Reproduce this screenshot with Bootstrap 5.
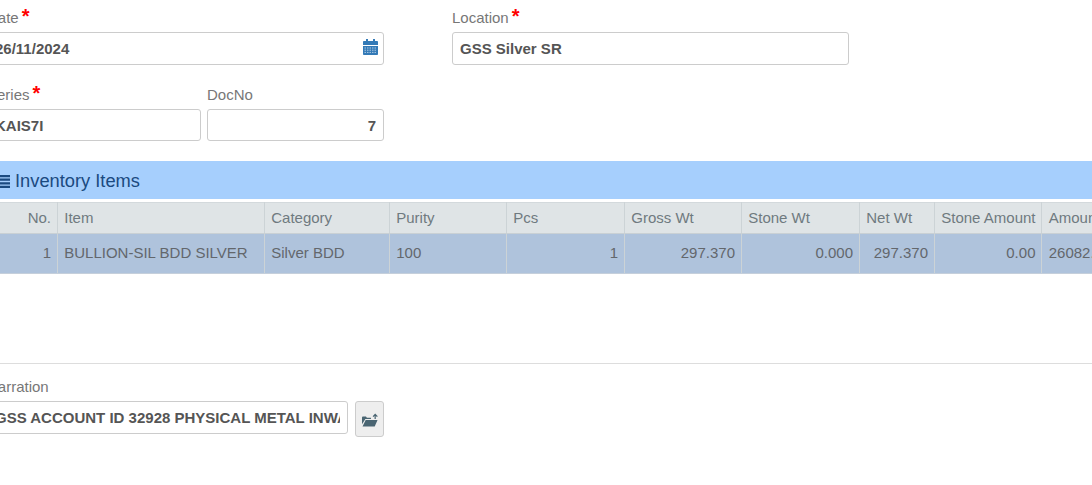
<!DOCTYPE html>
<html lang="en"><head><meta charset="utf-8"><title>Inventory</title>
<link href="https://cdn.jsdelivr.net/npm/bootstrap@5.3.0/dist/css/bootstrap.min.css" rel="stylesheet">
<style>
html,body{height:485px;overflow:hidden;background:#fff}
body{font-family:"Liberation Sans",Arial,sans-serif;font-size:15px;color:#555}
.sheet{margin-left:-13px;width:1240px;padding-top:8px}
.fld-label{display:block;color:#777;font-size:15px;line-height:20px;height:20px;margin:0 0 4px}
.req{color:#f00;font-size:20px;font-weight:700;line-height:14px;margin-left:3px;vertical-align:0}
.fld-input{display:block;height:33px;width:100%;border:1px solid #ccc;border-radius:3px;padding:0 7px;font-weight:700;font-size:15px;color:#555;background:#fff;font-family:inherit;outline:0}
.w-date{width:397px}.w-loc{width:397px;margin-left:68px}
.rowb{margin-top:20px}
.w-series{width:214px}.w-doc{width:177px;margin-left:6px}
.h32{height:32px}
.cal-wrap{position:relative}
.cal-ico{position:absolute;right:6px;top:7px;width:15px;height:16px}
.bar{margin-top:20px;height:38px;background:#a6cffd;color:#1b4a80;font-size:18.3px;line-height:40px;padding-left:13px;width:1105px}
.bar svg{width:10px;height:13px;margin-right:5px;vertical-align:-1px}
.inv{table-layout:fixed;border-collapse:collapse;margin-top:3px;width:auto}
.inv th,.inv td{padding:0 6px 0 6.25px;border:1px solid #ccd3d6;border-top:0;font-weight:400;font-size:15px;white-space:nowrap;overflow:hidden}
.inv th{height:31px;background:#dfe4e6;color:#6f7a80;border-top:1px solid #d3d9dc;border-bottom:1px solid #c9d0d4}
.inv td{height:40px;background:#afc3dc;color:#63676c;border-bottom:1px solid #c5cfdb}
.inv .num{text-align:right}
.rule{border:0;border-top:1px solid #ddd;opacity:1;margin:89px 0 0;width:1105px}
.nar{margin-top:13px}
.nar .fld-label{margin-bottom:4px}
.w-nar{width:361px}
.attach{width:29px;height:36px;margin-left:7px;padding:0;background:#eee;border:1px solid #ccc;border-radius:3px;display:flex;align-items:center;justify-content:center}
.attach svg{width:16px;height:14px;margin-top:2px}
</style></head>
<body>
<div class="sheet">
  <div class="d-flex">
    <div class="w-date"><label class="fld-label">Date<span class="req">*</span></label>
      <div class="cal-wrap"><input class="fld-input" value="26/11/2024">
        <svg class="cal-ico" viewBox="0 0 15 16"><path fill="#337ab7" d="M3 0h2v2h5V0h2v2h2.2c.4 0 .8.4.8.8V6H0V2.800C0 2.400.4 2 .8 2H3zM0 7h15v8.200c0 .4-.4.8-.8.8H.8c-.4 0-.8-.4-.8-.8z"/><path stroke="#cfe0f0" stroke-width=".8" stroke-dasharray="1.500 1" d="M1.500 9h12M1.500 11.200h12M1.500 13.400h12"/></svg>
      </div></div>
    <div class="w-loc"><label class="fld-label">Location<span class="req">*</span></label><input class="fld-input" value="GSS Silver SR"></div>
  </div>
  <div class="d-flex rowb">
    <div class="w-series"><label class="fld-label">Series<span class="req">*</span></label><input class="fld-input h32" value="KAIS7I"></div>
    <div class="w-doc"><label class="fld-label">DocNo</label><input class="fld-input h32 text-end" value="7"></div>
  </div>
  <div class="bar"><svg viewBox="0 0 10 13"><path fill="#1b4a80" d="M0 0h10v2.200H0zM0 3.600h10v2.200H0zM0 7.200h10v2.200H0zM0 10.800h10V13H0z"/></svg>Inventory Items</div>
  <table class="inv">
    <colgroup><col style="width:70px"><col style="width:207px"><col style="width:125px"><col style="width:117px"><col style="width:118px"><col style="width:117px"><col style="width:118px"><col style="width:75px"><col style="width:107px"><col style="width:120px"></colgroup>
    <thead><tr><th class="num">No.</th><th>Item</th><th>Category</th><th>Purity</th><th>Pcs</th><th>Gross Wt</th><th>Stone Wt</th><th>Net Wt</th><th>Stone Amount</th><th>Amount</th></tr></thead>
    <tbody><tr><td class="num">1</td><td>BULLION-SIL BDD SILVER</td><td>Silver BDD</td><td>100</td><td class="num">1</td><td class="num">297.370</td><td class="num">0.000</td><td class="num">297.370</td><td class="num">0.00</td><td>26082.00</td></tr></tbody>
  </table>
  <hr class="rule">
  <div class="nar"><label class="fld-label">Narration</label>
    <div class="d-flex align-items-start">
      <input class="fld-input w-nar" value="GSS ACCOUNT ID 32928 PHYSICAL METAL INWARD">
      <button type="button" class="attach" aria-label="Attach"><svg viewBox="0 0 17 14"><path fill="#4a6572" d="M0 4.500C0 3.900.5 3.400 1.200 3.400h3l1 1.100h4.300V6H3.600L0 11.500zM3.900 7H16.500L13.500 14H.6z"/><path fill="none" stroke="#4a6572" stroke-width="1.300" d="M14 6V1.500M11.800 3.500L14 1l2.300 2.500"/></svg></button>
    </div>
  </div>
</div>
</body></html>
